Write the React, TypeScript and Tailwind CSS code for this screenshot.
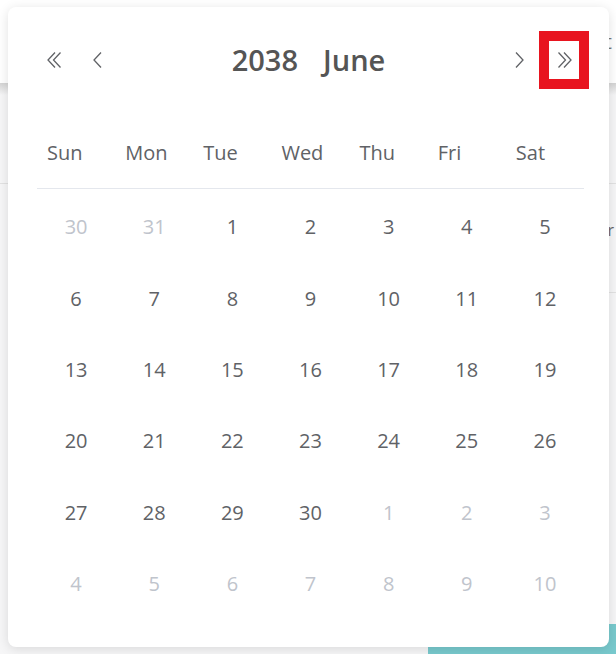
import React from "react";

const weekdays = ["Sun", "Mon", "Tue", "Wed", "Thu", "Fri", "Sat"];

type Day = { n: number; other: boolean };

function buildDays(): Day[] {
  const days: Day[] = [];
  days.push({ n: 30, other: true }, { n: 31, other: true });
  for (let i = 1; i <= 30; i++) days.push({ n: i, other: false });
  let k = 1;
  while (days.length < 42) days.push({ n: k++, other: true });
  return days;
}

function Chevron({ dir, double }: { dir: "left" | "right"; double?: boolean }) {
  const left = dir === "left";
  return (
    <svg width={double ? 18 : 12} height="18" viewBox={double ? "0 0 18 18" : "0 0 12 18"} fill="none" stroke="#606266" strokeWidth="1.3">
      {double ? (
        left ? (
          <>
            <path d="M9 1.5 L2 9 L9 16.5" />
            <path d="M14.5 1.5 L7.5 9 L14.5 16.5" />
          </>
        ) : (
          <>
            <path d="M3.5 1.5 L10.5 9 L3.5 16.5" />
            <path d="M9 1.5 L16 9 L9 16.5" />
          </>
        )
      ) : left ? (
        <path d="M9 1.5 L2 9 L9 16.5" />
      ) : (
        <path d="M3 1.5 L10 9 L3 16.5" />
      )}
    </svg>
  );
}

export default function App() {
  const days = buildDays();
  const rows = [0, 1, 2, 3, 4, 5].map((r) => days.slice(r * 7, r * 7 + 7));

  return (
    <div
      className="relative h-[654px] w-[616px] overflow-hidden bg-[#f6f6f7]"
      style={{ fontFamily: '"Open Sans", "Noto Sans", sans-serif' }}
    >
      {/* page behind the picker */}
      <div className="flex h-[83px] items-center justify-end bg-white pr-1 text-[20px] text-[#777]">t</div>
      <div className="h-[12px] bg-gradient-to-b from-[#d4d4d4] to-[#f6f6f7]" />
      <div className="mt-[88px] border-t border-[#e2e2e2]" />
      <div className="flex justify-between pt-[14px] text-[20px] text-[#666]">
        <span className="-ml-[11px]">e</span>
        <span className="mt-[20px] pr-[2px] text-[16px]">r</span>
      </div>
      <div className="mt-[50px] ml-auto w-[10px] border-t border-[#e2e2e2]" />
      <div className="absolute bottom-0 right-0 h-[30px] w-[188px] rounded-tl-[4px] bg-[#78c9cd]" />

      {/* date picker popup */}
      <div className="absolute left-[8px] top-[7px] h-[640px] w-[601px] rounded-[8px] bg-white shadow-[0_2px_12px_rgba(0,0,0,0.12)]">
        <div className="flex h-[106px] items-center px-[38px]">
          <button className="flex h-[30px] w-[30px] items-center justify-start">
            <Chevron dir="left" double />
          </button>
          <button className="ml-[16px] flex h-[30px] w-[22px] items-center justify-start">
            <Chevron dir="left" />
          </button>
          <div className="flex flex-1 justify-center gap-[25px] text-[29px] font-semibold text-[#555]">
            <span>2038</span>
            <span>June</span>
          </div>
          <button className="mr-[14px] flex h-[30px] w-[22px] items-center justify-end">
            <Chevron dir="right" />
          </button>
          <div className="-mr-[18px] flex h-[58px] w-[50px] items-center justify-center border-[10px] border-[#e8141f] bg-white">
            <Chevron dir="right" double />
          </div>
        </div>

        <div className="ml-[29px] w-[547px]">
          <div className="grid h-[76px] grid-cols-7 items-center border-b border-[#e4e7ed] pt-[5px]">
            {weekdays.map((w) => (
              <div key={w} className="pl-[10px] text-[20px] text-[#606266]">
                {w}
              </div>
            ))}
          </div>
          <div className="pt-[2.5px]">
            {rows.map((row, i) => (
              <div key={i} className="grid h-[71.4px] grid-cols-7 items-center">
                {row.map((d, j) => (
                  <div
                    key={j}
                    className={`text-center text-[20px] ${d.other ? "text-[#c0c4cc]" : "text-[#606266]"}`}
                  >
                    {d.n}
                  </div>
                ))}
              </div>
            ))}
          </div>
        </div>
      </div>
    </div>
  );
}
